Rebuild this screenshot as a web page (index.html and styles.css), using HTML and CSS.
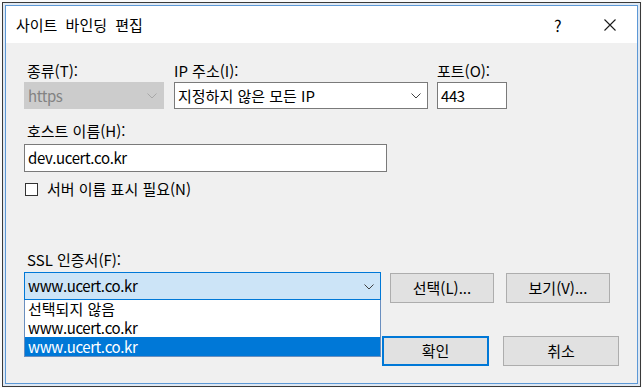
FILE: index.html
```html
<!DOCTYPE html>
<html lang="ko">
<head>
    <meta charset="UTF-8">
    <title>사이트 바인딩 편집</title>
    <link rel="stylesheet" href="styles.css">
</head>
<body>
    <div class="screen">
        <div class="outer">
            <div class="dialog">
                <div class="titlebar">
                    <span class="title">사이트 바인딩 편집</span>
                    <span class="help">?</span>
                    <span class="close">
                        <svg width="12" height="12" viewBox="0 0 12 12"><path d="M0.5 0.5 L11.5 11.5 M11.5 0.5 L0.5 11.5" stroke="#1a1a1a" stroke-width="1.1" fill="none"/></svg>
                    </span>
                </div>
                <div class="content">
                    <div class="row-top">
                        <div class="field type">
                            <div class="label pad">종류(T):</div>
                            <div class="combo disabled">
                                <span class="val">https</span>
                                <svg class="chev" width="10" height="6" viewBox="0 0 10 6"><path d="M0.5 0.5 L5 5 L9.5 0.5" stroke="#a8a8a8" fill="none"/></svg>
                            </div>
                        </div>
                        <div class="field ip">
                            <div class="label">IP 주소(I):</div>
                            <div class="combo">
                                <span>지정하지 않은 모든 IP</span>
                                <svg class="chev" width="10" height="6" viewBox="0 0 10 6"><path d="M0.5 0.5 L5 5 L9.5 0.5" stroke="#404040" fill="none"/></svg>
                            </div>
                        </div>
                        <div class="field port">
                            <div class="label">포트(O):</div>
                            <div class="input"><span class="val">443</span></div>
                        </div>
                    </div>

                    <div class="field host">
                        <div class="label pad">호스트 이름(H):</div>
                        <div class="input"><span class="val">dev.ucert.co.kr</span></div>
                    </div>

                    <div class="check">
                        <span class="box"></span>
                        <span>서버 이름 표시 필요(N)</span>
                    </div>

                    <div class="ssl">
                        <div class="label pad">SSL 인증서(F):</div>
                        <div class="ssl-row">
                            <div class="ssl-combo">
                                <div class="combo open">
                                    <span class="val">www.ucert.co.kr</span>
                                    <svg class="chev" width="10" height="6" viewBox="0 0 10 6"><path d="M0.5 0.5 L5 5 L9.5 0.5" stroke="#404040" fill="none"/></svg>
                                </div>
                                <div class="dropdown">
                                    <div class="item first">선택되지 않음</div>
                                    <div class="item val">www.ucert.co.kr</div>
                                    <div class="item val selected">www.ucert.co.kr</div>
                                </div>
                            </div>
                            <button class="btn select">선택(L)...</button>
                            <button class="btn view">보기(V)...</button>
                        </div>
                    </div>

                    <div class="actions">
                        <button class="btn ok">확인</button>
                        <button class="btn cancel">취소</button>
                    </div>
                </div>
            </div>
        </div>
    </div>
</body>
</html>
```

FILE: styles.css
```css
* {
    margin: 0;
    padding: 0;
    box-sizing: border-box;
}
body {
    font-family: "Noto Sans CJK KR", "Noto Sans", sans-serif;
    font-size: 15px;
    color: #000;
    background: #fafafa;
    width: 642px;
    height: 388px;
    overflow: hidden;
}
.screen {
    padding: 2px 1px 1px 2px;
    height: 388px;
}
.outer {
    border: 1px solid #3a3a3a;
    padding: 2px 2px 1px 2px;
    height: 100%;
    background: #dfe8f2;
}
.dialog {
    border: 1px solid #5c98d6;
    height: 379px;
    background: #f0f0f0;
    display: flex;
    flex-direction: column;
}
.titlebar {
    height: 37px;
    background: #fff;
    display: flex;
    align-items: center;
    padding-left: 10px;
}
.title {
    font-size: 15px;
    word-spacing: 4px;
    flex: 1;
    line-height: 20px;
    margin-top: 1px;
}
.help {
    font-size: 16px;
    width: 10px;
    margin-right: 40px;
    line-height: 20px;
    margin-top: 1px;
}
.close {
    display: flex;
    width: 12px;
    margin-right: 21px;
    margin-top: 1px;
}
.content {
    flex: 1;
    padding: 18px 18px 0 18px;
}
.label {
    height: 20px;
    line-height: 20px;
    margin-bottom: 1px;
    white-space: nowrap;
}
.label.pad {
    padding-left: 3px;
}
.val {
    letter-spacing: -0.4px;
}
.row-top {
    display: flex;
}
.type {
    width: 140px;
}
.ip {
    width: 254px;
    margin-left: 10px;
}
.port {
    width: 70px;
    margin-left: 9px;
}
.combo, .input {
    height: 27px;
    border: 1px solid #7a7a7a;
    background: #fff;
    display: flex;
    align-items: center;
    padding-left: 3px;
    line-height: 20px;
    white-space: nowrap;
}
.combo span {
    flex: 1;
}
.combo .chev {
    margin-right: 6px;
    margin-top: 1px;
}
.combo.disabled {
    background: #cccccc;
    border-color: #cccccc;
    color: #838383;
}
.host {
    margin-top: 12px;
}
.host .label {
    margin-bottom: 3px;
}
.host .input {
    width: 363px;
    height: 28px;
}
.check {
    margin-top: 7px;
    height: 20px;
    line-height: 20px;
    display: flex;
    align-items: center;
}
.check .box {
    width: 13px;
    height: 13px;
    border: 1px solid #333;
    background: #fff;
    margin-left: 1px;
    margin-right: 9px;
}
.ssl {
    margin-top: 51px;
}
.ssl .label {
    margin-bottom: 2px;
}
.ssl-row {
    display: flex;
    align-items: flex-start;
}
.ssl-combo {
    width: 357px;
    position: relative;
}
.combo.open {
    height: 28px;
    background: #cce4f7;
    border-color: #0078d7;
}
.dropdown {
    position: absolute;
    top: 28px;
    left: 0;
    width: 357px;
    background: #fff;
    border: 1px solid #6a8fbf;
    border-top: none;
    z-index: 2;
}
.item {
    height: 19px;
    line-height: 19px;
    padding-left: 3px;
    white-space: nowrap;
}
.item.first {
    height: 18px;
    line-height: 18px;
}
.item.selected {
    background: #0078d7;
    color: #fff;
}
.btn {
    font-family: inherit;
    font-size: 15px;
    color: #000;
    background: #e1e1e1;
    border: 1px solid #adadad;
    height: 30px;
    line-height: 20px;
}
.select {
    width: 104px;
    margin-left: 9px;
    margin-top: 1px;
}
.view {
    width: 104px;
    margin-left: 12px;
    margin-top: 1px;
}
.actions {
    margin-top: 33px;
    display: flex;
    justify-content: flex-end;
}
.ok {
    width: 107px;
    border: 2px solid #0078d7;
}
.cancel {
    width: 116px;
    margin-left: 14px;
}
```
